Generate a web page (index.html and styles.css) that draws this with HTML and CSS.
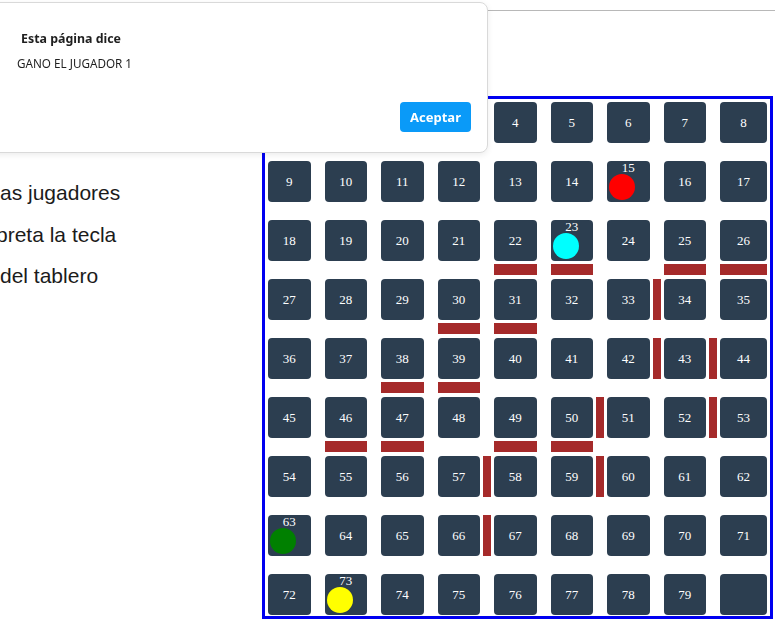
FILE: index.html
```html
<!DOCTYPE html>
<html lang="es">
<head>
<meta charset="utf-8">
<title>Tablero</title>
<link rel="stylesheet" href="styles.css">
</head>
<body>
<div class="topline"></div>
<div class="main">
  <div class="intro">
    <p class="line">as jugadores</p>
    <p class="line cut">preta la tecla</p>
    <p class="line">del tablero</p>
  </div>
  <div class="board">
    <div class="cell">0</div><div class="cell">1</div><div class="cell">2</div><div class="cell">3</div><div class="cell">4</div><div class="cell">5</div><div class="cell">6</div><div class="cell">7</div><div class="cell">8</div>
    <div class="cell">9</div><div class="cell">10</div><div class="cell">11</div><div class="cell">12</div><div class="cell">13</div><div class="cell">14</div><div class="cell has-token"><span class="num">15</span><span class="token red"></span></div><div class="cell">16</div><div class="cell">17</div>
    <div class="cell">18</div><div class="cell">19</div><div class="cell">20</div><div class="cell">21</div><div class="cell wb">22</div><div class="cell has-token wb"><span class="num">23</span><span class="token cyan"></span></div><div class="cell">24</div><div class="cell wb">25</div><div class="cell wb">26</div>
    <div class="cell">27</div><div class="cell">28</div><div class="cell">29</div><div class="cell wb">30</div><div class="cell wb">31</div><div class="cell">32</div><div class="cell wr">33</div><div class="cell">34</div><div class="cell">35</div>
    <div class="cell">36</div><div class="cell">37</div><div class="cell wb">38</div><div class="cell wb">39</div><div class="cell">40</div><div class="cell">41</div><div class="cell wr">42</div><div class="cell wr">43</div><div class="cell">44</div>
    <div class="cell">45</div><div class="cell wb">46</div><div class="cell wb">47</div><div class="cell">48</div><div class="cell wb">49</div><div class="cell wb wr">50</div><div class="cell">51</div><div class="cell wr">52</div><div class="cell">53</div>
    <div class="cell">54</div><div class="cell">55</div><div class="cell">56</div><div class="cell wr">57</div><div class="cell">58</div><div class="cell wr">59</div><div class="cell">60</div><div class="cell">61</div><div class="cell">62</div>
    <div class="cell has-token"><span class="num">63</span><span class="token green"></span></div><div class="cell">64</div><div class="cell">65</div><div class="cell wr">66</div><div class="cell">67</div><div class="cell">68</div><div class="cell">69</div><div class="cell">70</div><div class="cell">71</div>
    <div class="cell">72</div><div class="cell has-token"><span class="num">73</span><span class="token yellow"></span></div><div class="cell">74</div><div class="cell">75</div><div class="cell">76</div><div class="cell">77</div><div class="cell">78</div><div class="cell">79</div><div class="cell"></div>
  </div>
</div>

<div class="dialog" role="alertdialog">
  <div class="dialog-title">Esta página dice</div>
  <div class="dialog-msg">GANO EL JUGADOR 1</div>
  <div class="dialog-actions">
    <button class="btn-ok">Aceptar</button>
  </div>
</div>
</body>
</html>
```

FILE: styles.css
```css
html, body {
  margin: 0;
  padding: 0;
  background: #ffffff;
  overflow: hidden;
}

.topline {
  height: 10px;
  border-bottom: 1px solid #b8b8b8;
}

.main {
  display: flex;
  align-items: flex-start;
  padding-top: 85px;
}

.intro {
  flex: none;
  width: 262px;
  padding-top: 76px;
  overflow: hidden;
}

.line {
  margin: 0;
  font-family: "Liberation Sans", Arial, sans-serif;
  font-size: 21px;
  line-height: 41.5px;
  color: #1b1b1b;
  white-space: nowrap;
}

.line.cut {
  margin-left: -4px;
}

.board {
  flex: none;
  width: 499px;
  border: 3px solid #0000f0;
  padding: 3px 3px 1px 3px;
  display: grid;
  grid-template-columns: repeat(8, 42.5px) 1fr;
  grid-auto-rows: 41px;
  column-gap: 14px;
  row-gap: 18px;
}

.cell {
  position: relative;
  background: #2c3e50;
  border-radius: 4px;
  color: #ffffff;
  font-family: "Liberation Serif", "Times New Roman", serif;
  font-size: 13px;
  display: flex;
  align-items: center;
  justify-content: center;
}

.cell.has-token {
  flex-direction: column;
  justify-content: flex-start;
}

.num {
  line-height: 13px;
}

.token {
  align-self: flex-start;
  margin-left: 2px;
  width: 26px;
  height: 26px;
  border-radius: 50%;
}

.red { background: #ff0000; }
.cyan { background: #00ffff; }
.green { background: #008000; }
.yellow { background: #ffff00; }

.wr::after,
.wb::before {
  content: "";
  position: absolute;
  background: #a52a2a;
}

.wr::after {
  left: calc(100% + 3px);
  top: 0;
  width: 8px;
  height: 100%;
}

.wb::before {
  left: 0;
  top: calc(100% + 3px);
  width: 100%;
  height: 11px;
}

.dialog {
  position: fixed;
  left: -24px;
  top: 2px;
  width: 512px;
  height: 151px;
  box-sizing: border-box;
  background: #ffffff;
  border: 1px solid #d9d9d9;
  border-radius: 8px;
  box-shadow: 0 2px 6px rgba(0, 0, 0, 0.08);
  font-family: "Noto Sans", "Open Sans", sans-serif;
  color: #1f1f1f;
}

.dialog-title {
  margin: 27px 0 0 44px;
  font-size: 12.4px;
  font-weight: 700;
  line-height: 18px;
}

.dialog-msg {
  margin: 6px 0 0 40px;
  font-size: 11.7px;
  line-height: 18px;
}

.dialog-actions {
  display: flex;
  justify-content: flex-end;
  padding: 30px 16px 0 0;
}

.btn-ok {
  width: 71px;
  height: 30px;
  border: none;
  border-radius: 4px;
  background: #0a9af8;
  color: #ffffff;
  font-family: "Noto Sans", "Open Sans", sans-serif;
  font-size: 13px;
  font-weight: 700;
  padding: 0;
}
```
